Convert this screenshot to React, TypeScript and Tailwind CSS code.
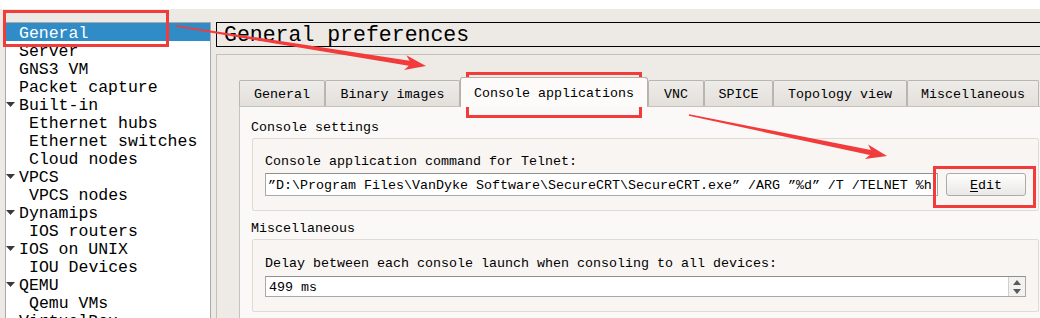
import React from "react";

type TreeItem = { label: string; child?: boolean; group?: boolean; selected?: boolean };

const tree: TreeItem[] = [
  { label: "General", selected: true },
  { label: "Server" },
  { label: "GNS3 VM" },
  { label: "Packet capture" },
  { label: "Built-in", group: true },
  { label: "Ethernet hubs", child: true },
  { label: "Ethernet switches", child: true },
  { label: "Cloud nodes", child: true },
  { label: "VPCS", group: true },
  { label: "VPCS nodes", child: true },
  { label: "Dynamips", group: true },
  { label: "IOS routers", child: true },
  { label: "IOS on UNIX", group: true },
  { label: "IOU Devices", child: true },
  { label: "QEMU", group: true },
  { label: "Qemu VMs", child: true },
  { label: "VirtualBox", group: true },
];

const tabs = [
  { label: "General", w: "w-[86px]" },
  { label: "Binary images", w: "w-[135px]" },
  { label: "Console applications", w: "w-[188px]", active: true },
  { label: "VNC", w: "w-[56px]" },
  { label: "SPICE", w: "w-[69px]" },
  { label: "Topology view", w: "w-[134px]" },
  { label: "Miscellaneous", w: "w-[132px]" },
];

const telnetCmd =
  "\u201dD:\\Program Files\\VanDyke Software\\SecureCRT\\SecureCRT.exe\u201d /ARG \u201d%d\u201d /T /TELNET %h";

// tapered red arrow like the ones screenshot tools draw
function arrowPoints(x1: number, y1: number, x2: number, y2: number) {
  const head = 21;
  const half = 7.5;
  const tail = 0.8;
  const neck = 2.5;
  const dx = x2 - x1;
  const dy = y2 - y1;
  const len = Math.hypot(dx, dy);
  const ux = dx / len;
  const uy = dy / len;
  const nx = -uy;
  const ny = ux;
  const bx = x2 - ux * head;
  const by = y2 - uy * head;
  const sx = x2 - ux * (head - 4);
  const sy = y2 - uy * (head - 4);
  const p = (x: number, y: number) => `${x.toFixed(1)},${y.toFixed(1)}`;
  return [
    p(x1 + nx * tail, y1 + ny * tail),
    p(sx + nx * neck, sy + ny * neck),
    p(bx + nx * half, by + ny * half),
    p(x2, y2),
    p(bx - nx * half, by - ny * half),
    p(sx - nx * neck, sy - ny * neck),
    p(x1 - nx * tail, y1 - ny * tail),
  ].join(" ");
}

function Caret() {
  return (
    <svg width="9" height="5" viewBox="0 0 9 5" className="block">
      <polygon points="0,0 9,0 4.5,5" fill="#3a3a3a" />
    </svg>
  );
}

export default function App() {
  return (
    <div className="relative h-[318px] w-[1040px] overflow-hidden bg-[#edeae6] font-['Liberation_Mono',monospace] text-black">
      <div className="h-[9px] bg-white" />

      <div className="flex gap-[5px] pl-[5px] pt-[13px]">
        {/* Preferences tree */}
        <div className="h-[300px] w-[206px] shrink-0 overflow-hidden border border-[#a9a9a9] bg-white text-[16.5px]">
          {tree.map((item) => (
            <div
              key={item.label}
              className={`flex h-[18px] items-center leading-[18px] whitespace-nowrap ${
                item.selected ? "bg-[#308cc6] text-white" : ""
              }`}
            >
              <div className="flex w-[13px] shrink-0 items-center">{item.group && <Caret />}</div>
              <span className={`pt-[4px] ${item.child ? "pl-[10px]" : ""}`}>{item.label}</span>
            </div>
          ))}
        </div>

        {/* Right side */}
        <div className="w-[830px] shrink-0">
          <div className="flex h-[25px] items-center border border-black pt-[2px] pl-[7px] text-[21.5px] leading-none">
            General preferences
          </div>

          <div className="mt-[7px] h-[300px] border border-[#c3c0bc] bg-[#eeebe7] pl-[22px] pt-[22px] text-[13.33px]">
            {/* Tab bar */}
            <div className="flex h-[29px] items-end">
              {tabs.map((t) =>
                t.active ? (
                  <div
                    key={t.label}
                    className={`relative z-10 -mb-px flex h-[30px] ${t.w} shrink-0 items-center justify-center rounded-t-[3px] border border-b-0 border-[#b5b2ae] bg-[#fcfbfa] pt-[2px] whitespace-nowrap`}
                  >
                    {t.label}
                  </div>
                ) : (
                  <div
                    key={t.label}
                    className={`flex h-[26px] ${t.w} shrink-0 items-center justify-center rounded-t-[2px] border border-b-0 border-[#b9b6b2] bg-gradient-to-b from-[#eeece9] to-[#e3e0dc] pt-[2px] whitespace-nowrap`}
                  >
                    {t.label}
                  </div>
                )
              )}
            </div>

            {/* Tab pane */}
            <div className="h-[220px] w-[813px] border border-[#c6c3bf] bg-[#fbf9f7] px-[12px] pt-[9px]">
              <div className="-ml-px flex h-[20px] items-center pt-[3px]">Console settings</div>
              <div className="mt-[2px] h-[73px] rounded-[2px] border border-[#dedad6] bg-[#f8f5f2] px-[12px] pt-[12px]">
                <div className="h-[16px] pt-[3px] leading-[16px]">Console application command for Telnet:</div>
                <div className="mt-[6px] flex gap-[8px]">
                  <div className="flex h-[23px] min-w-0 flex-1 items-center overflow-hidden border border-[#a8a8a8] border-t-[#8f8f8f] bg-white pt-[2px] pl-[2px] whitespace-nowrap">
                    {telnetCmd}
                  </div>
                  <button className="flex h-[23px] w-[80px] shrink-0 items-center justify-center rounded-[3px] border border-[#ababab] bg-gradient-to-b from-[#fefefe] to-[#e9e8e6] pt-[2px]">
                    <span className="underline underline-offset-2">E</span>dit
                  </button>
                </div>
              </div>

              <div className="mt-[6px] -ml-px flex h-[20px] items-center pt-[3px]">Miscellaneous</div>
              <div className="mt-[2px] h-[73px] rounded-[2px] border border-[#dedad6] bg-[#f8f5f2] px-[12px] pt-[13px]">
                <div className="h-[16px] pt-[3px] leading-[16px]">
                  Delay between each console launch when consoling to all devices:
                </div>
                <div className="mt-[7px] flex h-[21px] border border-[#a8a8a8] border-t-[#8f8f8f] bg-white">
                  <div className="flex flex-1 items-center pt-[2px] pl-[3px]">499 ms</div>
                  <div className="flex w-[17px] flex-col items-center justify-center gap-[4px] border-l border-[#cfcfcf] bg-[#f3f2f0]">
                    <svg width="8" height="5" viewBox="0 0 8 5" className="block">
                      <polygon points="4,0 8,5 0,5" fill="#5a5a5a" />
                    </svg>
                    <svg width="8" height="5" viewBox="0 0 8 5" className="block">
                      <polygon points="0,0 8,0 4,5" fill="#5a5a5a" />
                    </svg>
                  </div>
                </div>
              </div>
            </div>
          </div>
        </div>
      </div>

      {/* Red annotations drawn over the screenshot */}
      <svg
        className="pointer-events-none absolute inset-0"
        width="1040"
        height="318"
        viewBox="0 0 1040 318"
      >
        <g fill="none" stroke="#f23b3b" strokeWidth="3">
          <rect x="4.5" y="11.5" width="163" height="34" />
          <rect x="467.5" y="73.5" width="173" height="43" />
          <rect x="934.5" y="167.5" width="100" height="39" />
        </g>
        <g fill="#f23b3b">
          <polygon points={arrowPoints(176, 26, 426, 66)} />
          <polygon points={arrowPoints(689, 115, 887, 156)} />
        </g>
      </svg>
    </div>
  );
}
